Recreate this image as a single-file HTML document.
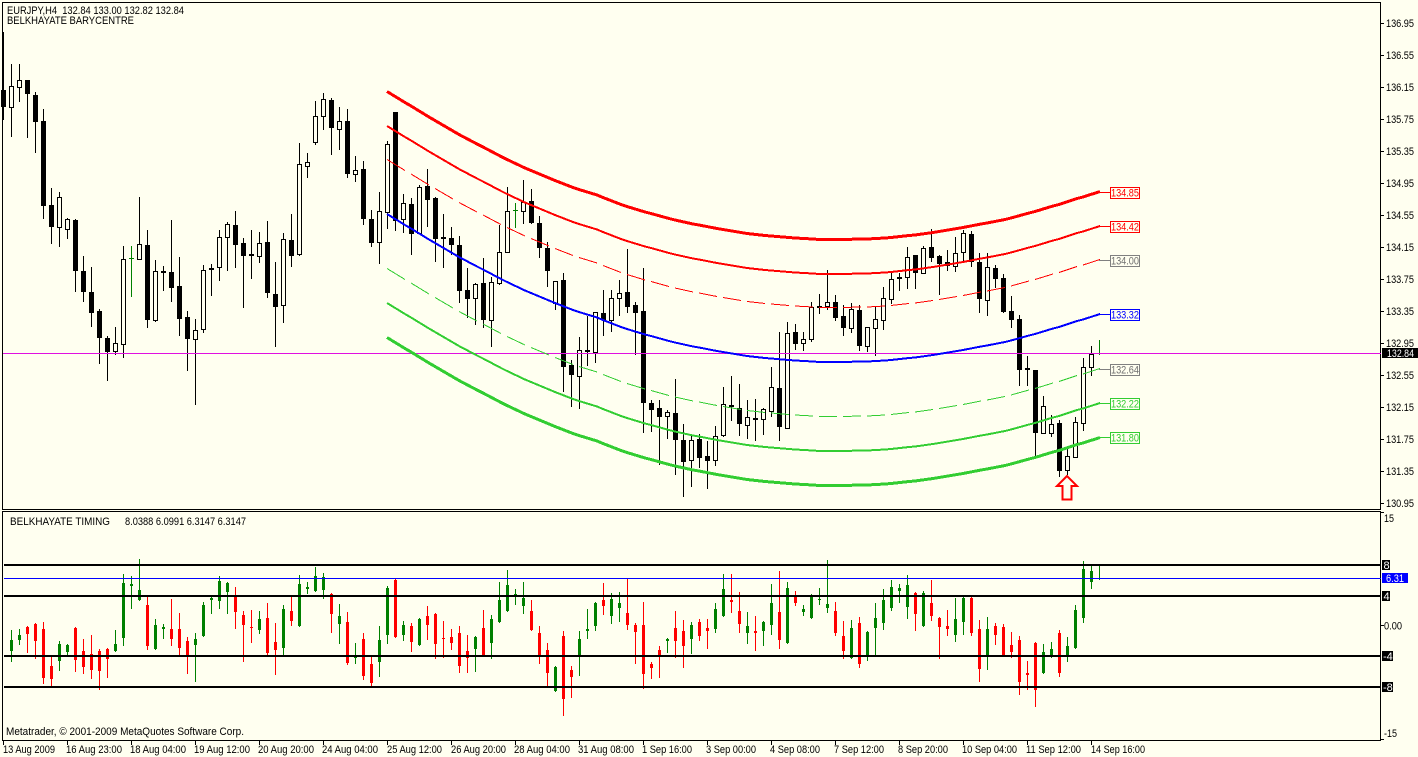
<!DOCTYPE html>
<html><head><meta charset="utf-8"><title>EURJPY,H4</title>
<style>
html,body{margin:0;padding:0;background:#fffff0;width:1418px;height:757px;overflow:hidden}
svg{display:block}
text{font-family:"Liberation Sans",Arial,sans-serif;font-size:11px;fill:#000;white-space:pre}
.w{fill:#fff}
</style></head><body>
<svg width="1418" height="757" viewBox="0 0 1418 757" xmlns="http://www.w3.org/2000/svg">
<rect width="1418" height="757" fill="#fffff0"/>
<defs>
<path id="c" fill="none" d="M387 214L405 225L411 228.5L429 239.5L435 243L453 253.5L459 257L477 266.5L483 269.5L501 279L507 282L525 290.5L531 293L549 300.5L555 303L573 310L579 312L597 317.5L603 320L621 327L627 329L645 334.5L651 336L669 341L675 342.5L693 346.5L699 347.5L717 351L723 352L741 355L747 356L765 358L771 358.5L789 360L795 360.5L813 361.5L819 362L837 362L843 362L861 361.5L867 361.5L885 360.5L891 360L909 358L915 357.5L933 355L939 354L957 351L963 350L981 346.5L987 345.5L1005 342L1011 340.5L1029 335.5L1035 334L1053 328.5L1059 327L1077 321L1083 319.5L1100 314"/>
<path id="d" fill="none" d="M387 214L405 225M411 228.5L429 239.5M435 243L453 253.5M459 257L477 266.5M483 269.5L501 279M507 282L525 290.5M531 293L549 300.5M555 303L573 310M579 312L597 317.5M603 320L621 327M627 329L645 334.5M651 336L669 341M675 342.5L693 346.5M699 347.5L717 351M723 352L741 355M747 356L765 358M771 358.5L789 360M795 360.5L813 361.5M819 362L837 362M843 362L861 361.5M867 361.5L885 360.5M891 360L909 358M915 357.5L933 355M939 354L957 351M963 350L981 346.5M987 345.5L1005 342M1011 340.5L1029 335.5M1035 334L1053 328.5M1059 327L1077 321M1083 319.5L1100 314"/>
</defs>

<g shape-rendering="crispEdges">
<!-- frames -->
<path fill="none" stroke="#000" d="M2.5 2.5H1380.5V509.5H2.5ZM2.5 511.5H1380.5V740.5H2.5Z"/>
<!-- price ticks -->
<path stroke="#000" d="M1381 23.5h3M1381 55.5h3M1381 87.5h3M1381 119.5h3M1381 151.5h3M1381 183.5h3M1381 215.5h3M1381 247.5h3M1381 279.5h3M1381 311.5h3M1381 343.5h3M1381 375.5h3M1381 407.5h3M1381 439.5h3M1381 471.5h3M1381 503.5h3M1381 512.5h3M1381 625.5h3M1381 739.5h3"/>
<!-- time ticks -->
<path stroke="#000" d="M3.5 741v4M67.5 741v4M131.5 741v4M195.5 741v4M259.5 741v4M323.5 741v4M387.5 741v4M451.5 741v4M515.5 741v4M579.5 741v4M643.5 741v4M707.5 741v4M771.5 741v4M835.5 741v4M899.5 741v4M963.5 741v4M1027.5 741v4M1091.5 741v4"/>

<!-- upper panel wicks -->
<path stroke="#000" fill="none" d="M3.5 32V120M11.5 64V137M19.5 64V102M27.5 80V138M35.5 92V153M43.5 109V219M51.5 188V244M59.5 192V247M67.5 218V239M75.5 219V292M83.5 256V302M91.5 267V327M99.5 309V364M107.5 336V381M115.5 327V355M123.5 246V358M139.5 197V259M147.5 230V328M155.5 260V322M163.5 266V291M171.5 220V302M179.5 257V336M187.5 311V371M195.5 319V405M203.5 265V333M211.5 264V296M219.5 230V281M227.5 222V271M235.5 211V268M243.5 238V308M251.5 230V279M259.5 232V263M267.5 221V298M275.5 262V347M283.5 233V323M291.5 214V267M299.5 143V256M307.5 153V178M315.5 101V145M323.5 93V130M331.5 98V155M339.5 107V150M347.5 109V178M355.5 156V182M363.5 161V225M371.5 210V247M379.5 192V264M387.5 141V229M395.5 112V231M403.5 194V233M411.5 198V255M419.5 185V234M427.5 169V227M435.5 197V262M443.5 214V268M451.5 227V255M459.5 236V303M467.5 268V318M475.5 283V325M483.5 258V328M491.5 277V347M499.5 225V285M507.5 187V252M523.5 180V224M531.5 189V224M539.5 216V258M547.5 242V287M555.5 281V310M563.5 273V392M571.5 360V407M579.5 337V409M587.5 316V366M595.5 312V363M603.5 290V336M611.5 290V332M619.5 280V316M627.5 249V313M635.5 302V355M643.5 268V433M651.5 400V432M659.5 400V465M667.5 410V439M675.5 379V475M683.5 424V497M691.5 434V487M699.5 434V468M707.5 441V489M715.5 426V466M723.5 387V437M731.5 376V421M739.5 384V436M747.5 400V439M755.5 399V441M763.5 408V435M771.5 367V417M779.5 332V441M787.5 322V429M795.5 324V350M803.5 332V351M811.5 302V342M819.5 294V314M827.5 270V310M835.5 295V321M843.5 305V336M851.5 303V333M859.5 305V351M867.5 327V352M875.5 307V356M883.5 287V330M891.5 273V304M899.5 273V291M907.5 247V289M915.5 255V289M923.5 246V274M931.5 229V262M939.5 255V295M947.5 250V271M955.5 237V272M963.5 230V262M971.5 231V267M979.5 253V313M987.5 253V316M995.5 265V288M1003.5 274V313M1011.5 296V328M1019.5 315V386M1027.5 356V386M1035.5 370V457M1043.5 396V433M1051.5 415V437M1059.5 420V477M1067.5 446V475M1075.5 417V457M1083.5 358V431M1091.5 346V376"/>
<path stroke="#008000" fill="none" d="M131.5 246V297M129 258.5h5M515.5 203V228M513 210.5h5M1099.5 340V355"/>

<!-- upper black bodies -->
<path stroke="#000" stroke-width="5" fill="none" d="M3.5 90V107M27.5 80V94M35.5 95V122M43.5 121V206M51.5 205V227M75.5 220V271M83.5 271V292M91.5 292V313M99.5 311V338M107.5 338V352M147.5 245V320M163.5 271V273M171.5 272V288M179.5 286V319M187.5 317V339M211.5 268V270M235.5 225V245M243.5 243V256M251.5 254V256M267.5 242V293M275.5 294V307M291.5 240V256M331.5 100V128M347.5 121V174M363.5 169V219M371.5 219V243M395.5 112V221M411.5 204V234M427.5 186V200M435.5 198V239M443.5 237V239M451.5 238V245M459.5 245V291M467.5 290V299M483.5 283V320M531.5 201V223M539.5 223V248M547.5 248V271M563.5 280V367M571.5 365V375M587.5 350V352M603.5 313V320M627.5 292V307M635.5 305V313M643.5 311V403M651.5 403V410M659.5 408V417M675.5 413V440M683.5 440V462M699.5 439V458M707.5 456V461M731.5 405V407M739.5 408V424M755.5 418V420M779.5 388V427M795.5 332V344M819.5 306V308M835.5 302V318M843.5 316V328M859.5 310V346M899.5 277V279M915.5 255V273M931.5 247V258M939.5 256V264M947.5 262V266M971.5 234V262M979.5 262V299M995.5 268V279M1003.5 278V312M1011.5 311V320M1019.5 319V370M1027.5 368V370M1035.5 370V433M1059.5 423V471"/>

<!-- upper hollow bodies -->
<path fill="#fffff0" stroke="#000" d="M9.5 86.5h4v21h-4zM17.5 80.5h4v7h-4zM57.5 197.5h4v30h-4zM65.5 219.5h4v10h-4zM113.5 343.5h4v8h-4zM121.5 259.5h4v85h-4zM137.5 244.5h4v15h-4zM153.5 271.5h4v49h-4zM193.5 330.5h4v9h-4zM201.5 270.5h4v59h-4zM217.5 237.5h4v30h-4zM225.5 224.5h4v13h-4zM257.5 243.5h4v13h-4zM281.5 239.5h4v66h-4zM297.5 164.5h4v90h-4zM305.5 162.5h4v4h-4zM313.5 116.5h4v26h-4zM321.5 99.5h4v17h-4zM337.5 121.5h4v8h-4zM353.5 170.5h4v4h-4zM377.5 211.5h4v31h-4zM385.5 144.5h4v68h-4zM401.5 203.5h4v16h-4zM417.5 187.5h4v46h-4zM473.5 284.5h4v14h-4zM489.5 282.5h4v38h-4zM497.5 252.5h4v31h-4zM505.5 211.5h4v41h-4zM521.5 202.5h4v9h-4zM553.5 281.5h4v22h-4zM577.5 350.5h4v26h-4zM593.5 312.5h4v40h-4zM609.5 298.5h4v22h-4zM617.5 293.5h4v5h-4zM665.5 412.5h4v4h-4zM689.5 440.5h4v20h-4zM713.5 436.5h4v24h-4zM721.5 404.5h4v31h-4zM745.5 417.5h4v8h-4zM761.5 409.5h4v10h-4zM769.5 387.5h4v24h-4zM785.5 333.5h4v95h-4zM801.5 339.5h4v4h-4zM809.5 307.5h4v32h-4zM825.5 302.5h4v4h-4zM849.5 309.5h4v19h-4zM865.5 327.5h4v19h-4zM873.5 319.5h4v9h-4zM881.5 298.5h4v22h-4zM889.5 279.5h4v20h-4zM905.5 257.5h4v20h-4zM921.5 248.5h4v25h-4zM953.5 253.5h4v13h-4zM961.5 233.5h4v19h-4zM985.5 267.5h4v33h-4zM1041.5 406.5h4v27h-4zM1049.5 424.5h4v9h-4zM1065.5 456.5h4v14h-4zM1073.5 422.5h4v35h-4zM1081.5 367.5h4v56h-4zM1089.5 354.5h4v13h-4z"/>

<!-- current price line -->
<path stroke="#e010e0" d="M3 353.5H1381"/>

<!-- barycentre curves -->
<use href="#c" stroke="#ff0000" stroke-width="3" transform="translate(0,-122.5)"/>
<use href="#c" stroke="#ff0000" stroke-width="2" transform="translate(0,-88)"/>
<use href="#d" stroke="#ff0000" stroke-width="1" transform="translate(0,-54.5)"/>
<use href="#c" stroke="#0000ff" stroke-width="2"/>
<use href="#d" stroke="#32cd32" stroke-width="1" transform="translate(0,54.5)"/>
<use href="#c" stroke="#32cd32" stroke-width="2" transform="translate(0,89)"/>
<use href="#c" stroke="#32cd32" stroke-width="3" transform="translate(0,123.5)"/>

<!-- label connectors and boxes -->
<path stroke="#ff0000" d="M1099 192.5h11M1099 226.5h11"/>
<path stroke="#808080" d="M1099 260.5h11M1099 369.5h11"/>
<path stroke="#0000ff" d="M1099 314.5h11"/>
<path stroke="#32cd32" d="M1099 403.5h11M1099 437.5h11"/>
<g fill="#fffff0">
<rect x="1110.5" y="187.5" width="29" height="11" stroke="#ff0000"/>
<rect x="1110.5" y="221.5" width="29" height="11" stroke="#ff0000"/>
<rect x="1110.5" y="255.5" width="29" height="11" stroke="#808080"/>
<rect x="1110.5" y="309.5" width="29" height="11" stroke="#0000ff"/>
<rect x="1110.5" y="364.5" width="29" height="11" stroke="#808080"/>
<rect x="1110.5" y="398.5" width="29" height="11" stroke="#32cd32"/>
<rect x="1110.5" y="432.5" width="29" height="11" stroke="#32cd32"/>
</g>
</g>

<!-- arrow -->
<path d="M1067 476L1057 486H1062.5V499.5H1071.5V486H1077Z" fill="#fffff0" stroke="#ff0000" stroke-width="2"/>

<!-- lower panel candles -->
<g shape-rendering="crispEdges" fill="none">
<path stroke="#008000" d="M11.5 630V662M19.5 629V645M59.5 641V671M67.5 644V657M115.5 630V652M123.5 574V646M131.5 576V609M139.5 559V601M155.5 619V650M163.5 624V639M195.5 633V682M203.5 602V637M211.5 596V614M219.5 576V609M227.5 582V614M259.5 611V634M283.5 605V657M299.5 575V627M307.5 582V594M315.5 567V592M323.5 573V599M339.5 604V644M355.5 643V664M379.5 626V677M387.5 586V644M403.5 621V641M419.5 618V646M475.5 636V672M491.5 615V659M499.5 582V623M507.5 570V612M515.5 589V605M523.5 582V614M555.5 666V692M579.5 631V676M587.5 609V639M595.5 602V631M611.5 593V624M619.5 592V622M667.5 638V653M691.5 622V654M715.5 603V633M723.5 574V617M747.5 612V644M763.5 621V646M771.5 584V635M787.5 582V644M803.5 605V616M811.5 594V619M819.5 588V605M827.5 560V613M851.5 620V659M867.5 631V661M875.5 603V657M883.5 589V630M891.5 580V611M899.5 584V603M907.5 575V619M923.5 591V627M955.5 598V642M963.5 597V635M987.5 617V670M1043.5 644V674M1051.5 642V658M1067.5 637V662M1075.5 605V649M1083.5 561V623M1091.5 564V589M1099.5 565V580"/>
<path stroke="#ff0000" d="M27.5 626V653M35.5 623V659M43.5 622V684M51.5 655V688M75.5 627V672M83.5 639V674M91.5 635V679M99.5 649V690M107.5 648V678M147.5 596V650M171.5 599V646M179.5 613V656M187.5 637V674M235.5 587V629M243.5 611V662M251.5 610V643M267.5 603V656M275.5 623V675M291.5 596V626M331.5 593V633M347.5 612V665M363.5 633V680M371.5 656V686M395.5 579V638M411.5 623V652M427.5 606V640M435.5 613V659M443.5 621V658M451.5 629V650M459.5 626V673M467.5 635V673M483.5 610V657M531.5 600V631M539.5 626V664M547.5 643V688M563.5 631V716M571.5 666V698M603.5 583V615M627.5 578V630M635.5 623V664M643.5 602V689M651.5 662V679M659.5 646V678M675.5 611V658M683.5 620V668M699.5 619V641M707.5 619V649M731.5 574V613M739.5 592V633M755.5 616V651M779.5 571V649M795.5 591V606M835.5 602V636M843.5 621V659M859.5 617V668M915.5 592V631M931.5 580V621M939.5 617V659M947.5 610V636M971.5 596V636M979.5 620V682M995.5 623V645M1003.5 624V657M1011.5 632V658M1019.5 636V695M1027.5 661V690M1035.5 642V707M1059.5 630V677"/>
<path stroke="#008000" stroke-width="3" d="M11.5 640V651M19.5 635V640M59.5 644V661M67.5 645V652M115.5 644V651M123.5 583V638M131.5 584V586M139.5 590V600M155.5 625V649M163.5 627V629M195.5 639V645M203.5 605V636M211.5 598V600M219.5 581V601M227.5 583V592M259.5 619V630M283.5 609V648M299.5 584V626M307.5 587V589M315.5 576V591M323.5 577V590M339.5 616V624M355.5 655V658M379.5 640V662M387.5 588V635M403.5 625V635M419.5 619V645M475.5 637V649M491.5 619V643M499.5 600V622M507.5 585V611M515.5 594V595M523.5 598V606M555.5 667V691M579.5 639V656M587.5 629V631M595.5 603V626M611.5 599V616M619.5 603V608M667.5 639V641M691.5 625V639M715.5 609V629M723.5 589V616M747.5 626V633M763.5 622V631M771.5 603V625M787.5 588V643M803.5 609V612M811.5 596V618M819.5 599V600M827.5 604V608M851.5 628V658M867.5 632V656M875.5 618V628M883.5 600V623M891.5 587V608M899.5 588V591M907.5 585V607M923.5 593V626M955.5 619V635M963.5 598V622M987.5 629V657M1043.5 652V673M1051.5 649V657M1067.5 646V656M1075.5 610V648M1083.5 569V618M1091.5 571V582M1099.5 578V579"/>
<path stroke="#ff0000" stroke-width="3" d="M27.5 627V634M35.5 624V641M43.5 629V678M51.5 666V679M75.5 628V660M83.5 651V667M91.5 654V670M99.5 651V671M107.5 649V659M147.5 605V646M171.5 629V639M179.5 629V648M187.5 641V656M235.5 596V612M243.5 615V625M251.5 627V628M267.5 618V653M275.5 642V650M291.5 611V621M331.5 594V614M347.5 622V663M363.5 639V676M371.5 664V683M395.5 580V637M411.5 626V642M427.5 616V625M435.5 614V644M443.5 638V639M451.5 637V643M459.5 633V666M467.5 651V658M483.5 628V656M531.5 611V630M539.5 633V656M547.5 650V673M563.5 636V699M571.5 670V677M603.5 600V606M627.5 613V625M635.5 625V632M643.5 625V674M651.5 664V668M659.5 650V656M675.5 628V641M683.5 631V646M699.5 622V636M707.5 628V631M731.5 600V602M739.5 611V624M755.5 631V633M779.5 612V640M795.5 596V603M835.5 611V633M843.5 636V651M859.5 623V664M915.5 593V614M931.5 603V616M939.5 618V627M947.5 626V629M971.5 598V633M979.5 629V669M995.5 626V635M1003.5 627V656M1011.5 645V652M1019.5 640V682M1027.5 673V675M1035.5 643V690M1059.5 633V673"/>
<!-- lower levels -->
<path stroke="#0000ff" d="M4 578.5H1381"/>
<path stroke="#000" stroke-width="2" d="M4 565H1381M4 596H1381M4 656H1381M4 687H1381"/>
<!-- axis flags -->
<rect x="1382" y="560" width="8" height="10" fill="#000"/>
<rect x="1382" y="591" width="8" height="10" fill="#000"/>
<rect x="1382" y="651" width="11" height="10" fill="#000"/>
<rect x="1382" y="682" width="11" height="10" fill="#000"/>
<rect x="1382" y="573" width="26" height="10" fill="#0000ff"/>
</g>

<!-- text -->
<text x="7" y="14" textLength="177" lengthAdjust="spacingAndGlyphs">EURJPY,H4  132.84 133.00 132.82 132.84</text>
<text x="7" y="24" textLength="127" lengthAdjust="spacingAndGlyphs">BELKHAYATE BARYCENTRE</text>

<g>
<text x="1386" y="27" textLength="28" lengthAdjust="spacingAndGlyphs">136.95</text>
<text x="1386" y="59" textLength="28" lengthAdjust="spacingAndGlyphs">136.55</text>
<text x="1386" y="91" textLength="28" lengthAdjust="spacingAndGlyphs">136.15</text>
<text x="1386" y="123" textLength="28" lengthAdjust="spacingAndGlyphs">135.75</text>
<text x="1386" y="155" textLength="28" lengthAdjust="spacingAndGlyphs">135.35</text>
<text x="1386" y="187" textLength="28" lengthAdjust="spacingAndGlyphs">134.95</text>
<text x="1386" y="219" textLength="28" lengthAdjust="spacingAndGlyphs">134.55</text>
<text x="1386" y="251" textLength="28" lengthAdjust="spacingAndGlyphs">134.15</text>
<text x="1386" y="283" textLength="28" lengthAdjust="spacingAndGlyphs">133.75</text>
<text x="1386" y="315" textLength="28" lengthAdjust="spacingAndGlyphs">133.35</text>
<text x="1386" y="347" textLength="28" lengthAdjust="spacingAndGlyphs">132.95</text>
<text x="1386" y="379" textLength="28" lengthAdjust="spacingAndGlyphs">132.55</text>
<text x="1386" y="411" textLength="28" lengthAdjust="spacingAndGlyphs">132.15</text>
<text x="1386" y="443" textLength="28" lengthAdjust="spacingAndGlyphs">131.75</text>
<text x="1386" y="475" textLength="28" lengthAdjust="spacingAndGlyphs">131.35</text>
<text x="1386" y="507" textLength="28" lengthAdjust="spacingAndGlyphs">130.95</text>
</g>
<rect x="1382" y="348" width="36" height="10" fill="#000" shape-rendering="crispEdges"/>
<text x="1387" y="357" textLength="27" lengthAdjust="spacingAndGlyphs" class="w">132.84</text>

<text x="1111" y="196.5" textLength="28" lengthAdjust="spacingAndGlyphs" style="fill:#ff0000">134.85</text>
<text x="1111" y="230.5" textLength="28" lengthAdjust="spacingAndGlyphs" style="fill:#ff0000">134.42</text>
<text x="1111" y="264.5" textLength="28" lengthAdjust="spacingAndGlyphs" style="fill:#707070">134.00</text>
<text x="1111" y="318.5" textLength="28" lengthAdjust="spacingAndGlyphs" style="fill:#0000ff">133.32</text>
<text x="1111" y="373.5" textLength="28" lengthAdjust="spacingAndGlyphs" style="fill:#707070">132.64</text>
<text x="1111" y="407.5" textLength="28" lengthAdjust="spacingAndGlyphs" style="fill:#32cd32">132.22</text>
<text x="1111" y="441.5" textLength="28" lengthAdjust="spacingAndGlyphs" style="fill:#32cd32">131.80</text>

<text x="10" y="525" textLength="100" lengthAdjust="spacingAndGlyphs">BELKHAYATE TIMING</text>
<text x="125" y="525" textLength="121" lengthAdjust="spacingAndGlyphs">8.0388 6.0991 6.3147 6.3147</text>
<text x="6" y="735" textLength="238" lengthAdjust="spacingAndGlyphs">Metatrader, © 2001-2009 MetaQuotes Software Corp.</text>

<text x="1384" y="522" textLength="10" lengthAdjust="spacingAndGlyphs">15</text>
<text x="1384" y="629.5" textLength="18" lengthAdjust="spacingAndGlyphs">0.00</text>
<text x="1384" y="737" textLength="13" lengthAdjust="spacingAndGlyphs">-15</text>
<text x="1383.5" y="569" class="w">8</text>
<text x="1383.5" y="600" class="w">4</text>
<text x="1383" y="660" class="w">-4</text>
<text x="1383" y="691" class="w">-8</text>
<text x="1386" y="582" textLength="18" lengthAdjust="spacingAndGlyphs" class="w">6.31</text>

<text x="3" y="753" textLength="52" lengthAdjust="spacingAndGlyphs">13 Aug 2009</text>
<text x="66" y="753" textLength="56" lengthAdjust="spacingAndGlyphs">16 Aug 23:00</text>
<text x="130" y="753" textLength="56" lengthAdjust="spacingAndGlyphs">18 Aug 04:00</text>
<text x="194" y="753" textLength="56" lengthAdjust="spacingAndGlyphs">19 Aug 12:00</text>
<text x="258" y="753" textLength="56" lengthAdjust="spacingAndGlyphs">20 Aug 20:00</text>
<text x="322" y="753" textLength="56" lengthAdjust="spacingAndGlyphs">24 Aug 04:00</text>
<text x="387" y="753" textLength="55" lengthAdjust="spacingAndGlyphs">25 Aug 12:00</text>
<text x="451" y="753" textLength="55" lengthAdjust="spacingAndGlyphs">26 Aug 20:00</text>
<text x="514" y="753" textLength="56" lengthAdjust="spacingAndGlyphs">28 Aug 04:00</text>
<text x="578" y="753" textLength="56" lengthAdjust="spacingAndGlyphs">31 Aug 08:00</text>
<text x="642" y="753" textLength="50" lengthAdjust="spacingAndGlyphs">1 Sep 16:00</text>
<text x="706" y="753" textLength="50" lengthAdjust="spacingAndGlyphs">3 Sep 00:00</text>
<text x="770" y="753" textLength="50" lengthAdjust="spacingAndGlyphs">4 Sep 08:00</text>
<text x="834" y="753" textLength="50" lengthAdjust="spacingAndGlyphs">7 Sep 12:00</text>
<text x="898" y="753" textLength="50" lengthAdjust="spacingAndGlyphs">8 Sep 20:00</text>
<text x="962" y="753" textLength="55" lengthAdjust="spacingAndGlyphs">10 Sep 04:00</text>
<text x="1026" y="753" textLength="55" lengthAdjust="spacingAndGlyphs">11 Sep 12:00</text>
<text x="1091" y="753" textLength="54" lengthAdjust="spacingAndGlyphs">14 Sep 16:00</text>
</svg>
</body></html>
